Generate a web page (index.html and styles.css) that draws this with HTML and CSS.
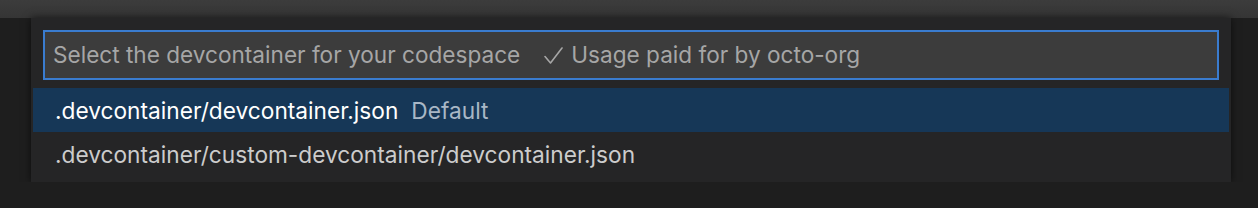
FILE: index.html
```html
<!DOCTYPE html>
<html>
<head>
<meta charset="utf-8">
<link rel="stylesheet" href="styles.css">
</head>
<body>
<div class="titlebar"></div>
<div class="quickpick">
  <div class="input">
    <span class="placeholder">Select the devcontainer for your codespace</span>
    <span class="placeholder info"><svg class="check" width="19" height="17" viewBox="0 0 19 17"><polyline points="1,9.5 6.5,16 18,1" fill="none" stroke="#a6a6a6" stroke-width="1.6" stroke-linecap="round" stroke-linejoin="round"/></svg><span>Usage paid for by octo-org</span></span>
  </div>
  <div class="list">
    <div class="row selected"><span class="label">.devcontainer/devcontainer.json</span><span class="desc">Default</span></div>
    <div class="row"><span class="label">.devcontainer/custom-devcontainer/devcontainer.json</span></div>
  </div>
</div>
</body>
</html>
```
FILE: styles.css
```css
html, body {
  margin: 0;
  padding: 0;
  background: #1e1e1e;
  font-family: Inter, "Noto Sans", "Liberation Sans", sans-serif;
  overflow: hidden;
}
.titlebar {
  height: 18px;
  background: linear-gradient(#3c3c3c, #353535);
}
.quickpick {
  margin-left: 31px;
  width: 1200px;
  height: 164px;
  box-sizing: border-box;
  background: #252526;
  box-shadow: 0 0 8px rgba(0, 0, 0, 0.6);
  padding: 12px 0 6px 0;
}
.input {
  margin: 0 12px;
  height: 50px;
  box-sizing: border-box;
  border: 2px solid #3a7ccf;
  background: #3c3c3c;
  display: flex;
  align-items: center;
  padding-left: 8px;
  padding-bottom: 1px;
  gap: 24px;
  font-size: 22.6px;
}
.placeholder {
  color: #a6a6a6;
}
.info {
  display: flex;
  align-items: center;
  gap: 8px;
}
.check {
  display: block;
  margin-top: 1px;
}
.list {
  margin: 8px 2px 0 2px;
}
.row {
  height: 44px;
  display: flex;
  align-items: center;
  padding-left: 22px;
  font-size: 22.7px;
  color: #cccccc;
  gap: 13px;
}
.row.selected {
  background: #163757;
  color: #ffffff;
}
.desc {
  color: #a9b7c6;
}
```
